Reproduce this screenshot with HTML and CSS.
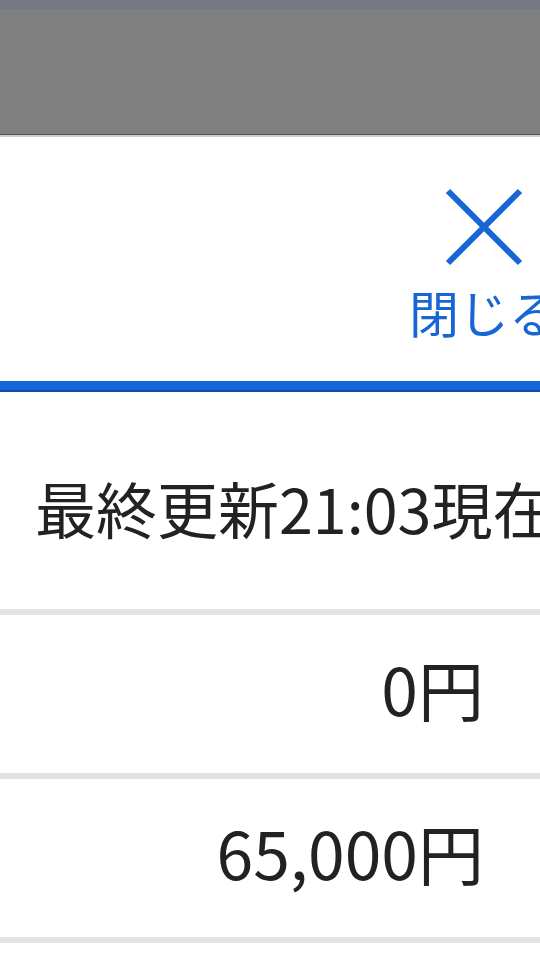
FILE: index.html
```html
<!DOCTYPE html>
<html lang="ja">
<head>
    <meta charset="UTF-8">
    <meta name="viewport" content="width=device-width, initial-scale=1.0">
    <title>残高照会</title>
    <link rel="stylesheet" href="styles.css">
</head>
<body>
    <!-- Page behind the modal, dimmed -->
    <div class="backdrop">
        <div class="backdrop-top"></div>
    </div>

    <div class="modal">
        <div class="modal-header">
            <button class="close-button" type="button">
                <svg class="close-icon" viewBox="0 0 80 80" width="80" height="80">
                    <path d="M4 4 L76 76 M76 4 L4 76" stroke="currentColor" stroke-width="6" fill="none"/>
                </svg>
                <span class="close-label">閉じる</span>
            </button>
        </div>

        <div class="updated">最終更新21:03現在</div>

        <div class="amount-row">
            <span class="amount">0円</span>
        </div>
        <div class="amount-row">
            <span class="amount">65,000円</span>
        </div>
    </div>
</body>
</html>
```

FILE: styles.css
```css
html, body {
    margin: 0;
    padding: 0;
    overflow: hidden;
}
body {
    width: 540px;
    height: 960px;
    background-color: #fff;
    font-family: "Noto Sans CJK JP", "Noto Sans", sans-serif;
    color: #222;
}
.backdrop {
    height: 134px;
    background-color: #808080;
    border-bottom: 1px solid #555;
    box-shadow: 0 2px 0 #d0d0d0;
}
.backdrop-top {
    height: 9px;
    background-color: #757883;
}
.modal {
    margin-top: 2px;
    background-color: #fff;
}
.modal-header {
    height: 244px;
    display: flex;
    justify-content: flex-end;
    border-bottom: 9px solid #1565d8;
    box-shadow: 0 2px 0 #0e4fae;
    margin-bottom: 2px;
}
.close-button {
    flex-shrink: 0;
    width: 150px;
    margin-right: -19px;
    padding: 50px 0 0;
    background: none;
    border: none;
    color: #1866d6;
    display: flex;
    flex-direction: column;
    align-items: center;
    font-family: inherit;
    cursor: pointer;
}
.close-icon {
    display: block;
}
.close-label {
    margin-top: 19px;
    font-size: 50px;
    line-height: 1;
    white-space: nowrap;
}
.updated {
    height: 223px;
    padding-left: 35px;
    display: flex;
    align-items: center;
    padding-top: 13px;
    box-sizing: border-box;
    font-size: 61px;
    white-space: nowrap;
    overflow: hidden;
    border-bottom: 6px solid #e3e3e3;
}
.amount-row {
    height: 158px;
    padding-right: 56px;
    padding-bottom: 0;
    box-sizing: content-box;
    display: flex;
    align-items: center;
    justify-content: flex-end;
    border-bottom: 6px solid #e3e3e3;
}
.amount {
    font-size: 66px;
    line-height: 1;
    white-space: nowrap;
    margin-bottom: 14px;
}
```
